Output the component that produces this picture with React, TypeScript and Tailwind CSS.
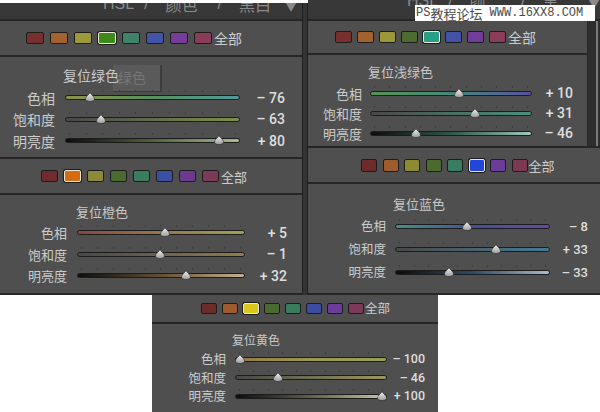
import React from "react";

type Row = { label: string; value: string; v: number; grad: string };
type Cfg = {
  colors: string[];
  sel: number;
  swRow: string;
  swGap: string;
  swSize: string;
  allCls: string;
  slBox: string;
  title: string;
  titleCls: string;
  rowH: string;
  labelCls: string;
  trackCls: string;
  trackW: number;
  valueCls: string;
  rows: Row[];
};

function Thumb() {
  return (
    <svg width="10" height="10" viewBox="0 0 10 10">
      <defs>
        <linearGradient id="thumbgrad" x1="0" y1="0" x2="0" y2="1">
          <stop offset="0" stopColor="#f4f4f4" />
          <stop offset="1" stopColor="#9c9c9c" />
        </linearGradient>
      </defs>
      <path
        d="M5 0.5 C5.6 2.2 9.5 4.6 9.5 7 C9.5 8.6 7.6 9.5 5 9.5 C2.4 9.5 0.5 8.6 0.5 7 C0.5 4.6 4.4 2.2 5 0.5 Z"
        fill="url(#thumbgrad)"
        stroke="#2a2a2a"
        strokeWidth="0.6"
      />
    </svg>
  );
}

function Slider({ W, cls, grad, v }: { W: number; cls: string; grad: string; v: number }) {
  const pct = (v + 100) / 200;
  return (
    <div className={`relative h-[5px] shrink-0 ${cls}`}>
      <div className="absolute left-[4px] right-[4px] -top-[5px] flex justify-between">
        {Array.from({ length: 11 }).map((_, i) => (
          <div key={i} className="w-px h-[2px] bg-[#3e3e3e]" />
        ))}
      </div>
      <div className={`h-[5px] rounded-full border border-[#1c1c1c] ${grad}`} />
      <div className="absolute -top-[3px]" style={{ left: pct * (W - 10) }}>
        <Thumb />
      </div>
    </div>
  );
}

function Swatches({ c }: { c: Cfg }) {
  return (
    <div className={`flex items-center bg-[#4f4f4f] shrink-0 ${c.swRow}`}>
      <div className={`flex items-center ${c.swGap}`}>
        {c.colors.map((col, i) =>
          i === c.sel ? (
            <div key={i} className={`${c.swSize} ${col} rounded-[2px] border border-[#ecead6] ring-1 ring-[#1c1c1c]`} />
          ) : (
            <div key={i} className={`${c.swSize} ${col} rounded-[2px] border border-[#1c1c1c]`} />
          )
        )}
      </div>
      <span className={`leading-none text-[#cdcdcd] ${c.allCls}`}>全部</span>
    </div>
  );
}

function Sliders({ c, children }: { c: Cfg; children?: React.ReactNode }) {
  return (
    <div className={`relative flex flex-col bg-[#4f4f4f] shrink-0 ${c.slBox}`}>
      {children}
      <div className={`relative z-10 h-[16px] leading-[16px] text-[#c8c8c8] ${c.titleCls}`}>{c.title}</div>
      {c.rows.map((r, i) => (
        <div key={i} className={`flex items-center ${c.rowH}`}>
          <div className={`shrink-0 text-right leading-none text-[#cccccc] ${c.labelCls}`}>{r.label}</div>
          <Slider W={c.trackW} cls={c.trackCls} grad={r.grad} v={r.v} />
          <div
            className={`shrink-0 text-right leading-none text-[#dedede] font-['Roboto','Noto_Sans_CJK_SC',sans-serif] font-medium ${c.valueCls}`}
          >
            {r.value}
          </div>
        </div>
      ))}
    </div>
  );
}

const Line = () => <div className="h-[2px] bg-[#262626] shrink-0" />;

function Header({ cls, padCls }: { cls: string; padCls: string }) {
  return (
    <div className={`overflow-hidden bg-[#383838] shrink-0 ${cls}`}>
      <div className={`flex items-start h-[16px] leading-[16px] text-[16px] text-[#8a8a8a] ${padCls}`}>
        <span className="font-['Liberation_Sans',sans-serif]">HSL</span>
        <span className="ml-[10px] font-['Liberation_Sans',sans-serif]">/</span>
        <span className="ml-[17px]">颜色</span>
        <span className="ml-[20px] font-['Liberation_Sans',sans-serif]">/</span>
        <span className="ml-[17px]">黑白</span>
        <span className="ml-[14px] text-[12px] mt-[2px]">▼</span>
      </div>
    </div>
  );
}

const A: Cfg = {
  colors: ["bg-[#78302f]", "bg-[#a4622e]", "bg-[#9e9a3a]", "bg-[#3e8a18]", "bg-[#3e8468]", "bg-[#4254a6]", "bg-[#763c9a]", "bg-[#8a3c5a]"],
  sel: 3,
  swRow: "h-[34px] pl-[26px]",
  swGap: "gap-[6px]",
  swSize: "w-[18px] h-[12px]",
  allCls: "ml-[2px] text-[14px]",
  slBox: "h-[100px] pt-[10px]",
  title: "复位绿色",
  titleCls: "pl-[63px] text-[14px] mb-[4px]",
  rowH: "h-[21.5px]",
  labelCls: "w-[55px] text-[14px]",
  trackCls: "ml-[10px] w-[175px]",
  trackW: 175,
  valueCls: "w-[45px] text-[14px]",
  rows: [
    { label: "色相", value: "– 76", v: -76, grad: "bg-linear-to-r from-[#8a9448] via-[#58905e] to-[#4a9c9c]" },
    { label: "饱和度", value: "– 63", v: -63, grad: "bg-linear-to-r from-[#484848] to-[#7a9048]" },
    { label: "明亮度", value: "+ 80", v: 80, grad: "bg-linear-to-r from-[#0e0e0e] via-[#4c6636] to-[#a8bc94]" },
  ],
};

const B: Cfg = {
  colors: ["bg-[#702c2c]", "bg-[#d66c12]", "bg-[#8c8a3a]", "bg-[#4a6a30]", "bg-[#3a7c5e]", "bg-[#3c50a2]", "bg-[#6c3a8c]", "bg-[#7c3a5a]"],
  sel: 1,
  swRow: "h-[34px] pl-[41px]",
  swGap: "gap-[6px]",
  swSize: "w-[17px] h-[12px]",
  allCls: "ml-[2px] text-[13px]",
  slBox: "h-[98px] pt-[9px]",
  title: "复位橙色",
  titleCls: "pl-[76px] text-[13px] mb-[2px]",
  rowH: "h-[21.5px]",
  labelCls: "w-[67px] text-[13px]",
  trackCls: "ml-[10px] w-[168px]",
  trackW: 168,
  valueCls: "w-[42px] text-[14px]",
  rows: [
    { label: "色相", value: "+ 5", v: 5, grad: "bg-linear-to-r from-[#864646] via-[#94784a] to-[#a29e56]" },
    { label: "饱和度", value: "– 1", v: -1, grad: "bg-linear-to-r from-[#484848] to-[#967a4e]" },
    { label: "明亮度", value: "+ 32", v: 32, grad: "bg-linear-to-r from-[#0e0e0e] via-[#665034] to-[#c6b094]" },
  ],
};

const C: Cfg = {
  colors: ["bg-[#78302f]", "bg-[#a2622e]", "bg-[#9c983a]", "bg-[#4c6c30]", "bg-[#28a088]", "bg-[#4252a4]", "bg-[#723c9a]", "bg-[#8a3c58]"],
  sel: 4,
  swRow: "h-[32px] pl-[27px]",
  swGap: "gap-[5px]",
  swSize: "w-[17px] h-[12px]",
  allCls: "ml-[2px] text-[14px]",
  slBox: "h-[91px] pt-[9px]",
  title: "复位浅绿色",
  titleCls: "pl-[60px] text-[13px] mb-[3px]",
  rowH: "h-[20px]",
  labelCls: "w-[54px] text-[13px]",
  trackCls: "ml-[8px] w-[162px]",
  trackW: 162,
  valueCls: "w-[41px] text-[14px]",
  rows: [
    { label: "色相", value: "+ 10", v: 10, grad: "bg-linear-to-r from-[#549452] via-[#428a7a] to-[#54509e]" },
    { label: "饱和度", value: "+ 31", v: 31, grad: "bg-linear-to-r from-[#484848] to-[#44927e]" },
    { label: "明亮度", value: "– 46", v: -46, grad: "bg-linear-to-r from-[#0e0e0e] via-[#2e584c] to-[#a2c6be]" },
  ],
};

const D: Cfg = {
  colors: ["bg-[#6c2c2c]", "bg-[#9c5c2c]", "bg-[#8c8a32]", "bg-[#4a6a30]", "bg-[#3a7c62]", "bg-[#2246d8]", "bg-[#6c3c9a]", "bg-[#7c3a52]"],
  sel: 5,
  swRow: "h-[34px] pl-[53px]",
  swGap: "gap-[5.5px]",
  swSize: "w-[16px] h-[13px]",
  allCls: "ml-[1px] text-[13px]",
  slBox: "h-[109px] pt-[12px]",
  title: "复位蓝色",
  titleCls: "pl-[85px] text-[13px] mb-[2.5px]",
  rowH: "h-[23px]",
  labelCls: "w-[78px] text-[12.5px]",
  trackCls: "ml-[9px] w-[155px]",
  trackW: 155,
  valueCls: "w-[38px] text-[13px]",
  rows: [
    { label: "色相", value: "– 8", v: -8, grad: "bg-linear-to-r from-[#44927e] via-[#40529c] to-[#6a46a4]" },
    { label: "饱和度", value: "+ 33", v: 33, grad: "bg-linear-to-r from-[#484848] to-[#447a96]" },
    { label: "明亮度", value: "– 33", v: -33, grad: "bg-linear-to-r from-[#0e0e0e] via-[#2e4a66] to-[#a8bece]" },
  ],
};

const E: Cfg = {
  colors: ["bg-[#6c2c2c]", "bg-[#9c5c30]", "bg-[#d8c81e]", "bg-[#4a6a30]", "bg-[#3a7c5c]", "bg-[#3c4ca2]", "bg-[#6c3c9a]", "bg-[#7c3a5a]"],
  sel: 2,
  swRow: "h-[27px] pl-[49px]",
  swGap: "gap-[5px]",
  swSize: "w-[16px] h-[11px]",
  allCls: "ml-[1px] text-[12.5px]",
  slBox: "h-[88px] pt-[8px]",
  title: "复位黄色",
  titleCls: "pl-[80px] text-[12px] mb-[2px]",
  rowH: "h-[18.5px]",
  labelCls: "w-[74px] text-[12.5px]",
  trackCls: "ml-[9px] w-[152px]",
  trackW: 152,
  valueCls: "w-[38px] text-[12.5px]",
  rows: [
    { label: "色相", value: "– 100", v: -100, grad: "bg-linear-to-r from-[#967a48] via-[#9c984e] to-[#989e58]" },
    { label: "饱和度", value: "– 46", v: -46, grad: "bg-linear-to-r from-[#484848] to-[#9c985e]" },
    { label: "明亮度", value: "+ 100", v: 100, grad: "bg-linear-to-r from-[#0e0e0e] via-[#666044] to-[#cec8a4]" },
  ],
};

export default function App() {
  return (
    <div className="relative w-[600px] h-[412px] overflow-hidden bg-white font-['Noto_Sans_CJK_SC','Noto_Sans',sans-serif]">
      <div className="flex h-[295px]">
        {/* left column */}
        <div className="flex flex-col w-[302px] shrink-0 bg-[#262626]">
          <div className="h-[3px] bg-white shrink-0" />
          <Header cls="h-[16px]" padCls="pl-[103px] -mt-[7px]" />
          <Line />
          <Swatches c={A} />
          <Line />
          <Sliders c={A}>
            <div className="absolute left-[113px] top-[8px] w-[49px] h-[27px] bg-[#5a5a5a] border-r-2 border-b border-[#3c3c3c] pl-[5px] pt-[4px] text-[14px] leading-[16px] text-[#767676]">
              绿色
            </div>
          </Sliders>
          <Line />
          <Swatches c={B} />
          <Line />
          <Sliders c={B} />
          <Line />
        </div>
        {/* gutter */}
        <div className="flex flex-col w-[6px] shrink-0">
          <div className="h-[3px] bg-white shrink-0" />
          <div className="flex-1 bg-[#343434] border-x border-[#1e1e1e]" />
        </div>
        {/* right column */}
        <div className="flex flex-col w-[292px] shrink-0 bg-[#262626]">
          <Header cls="h-[19px]" padCls="pl-[99px] -mt-[7px]" />
          <Line />
          <div className="flex h-[125px] shrink-0">
            <div className="flex flex-col w-[280px] border-r border-[#262626]">
              <Swatches c={C} />
              <Line />
              <Sliders c={C} />
            </div>
            <div className="flex-1 bg-[#2e2e2e] flex justify-end pr-[2px]">
              <div className="w-[2px] bg-[#7a7a7a]" />
            </div>
          </div>
          <Line />
          <Swatches c={D} />
          <Line />
          <Sliders c={D} />
          <Line />
        </div>
      </div>
      <div className="flex h-[117px] bg-white">
        <div className="ml-[152px] w-[286px] flex flex-col bg-[#4f4f4f]">
          <Swatches c={E} />
          <Line />
          <Sliders c={E} />
        </div>
      </div>
      <div className="absolute left-[415px] top-[5px] w-[180px] h-[16px] bg-white flex items-center pl-[1px] text-[#4a4a4a] leading-none whitespace-nowrap">
        <span className="font-['Liberation_Mono',monospace] text-[12px]">PS</span>
        <span className="text-[13px]">教程论坛</span>
        <span className="font-['Liberation_Mono',monospace] text-[12px]">&nbsp;WWW.16XX8.COM</span>
      </div>
    </div>
  );
}
